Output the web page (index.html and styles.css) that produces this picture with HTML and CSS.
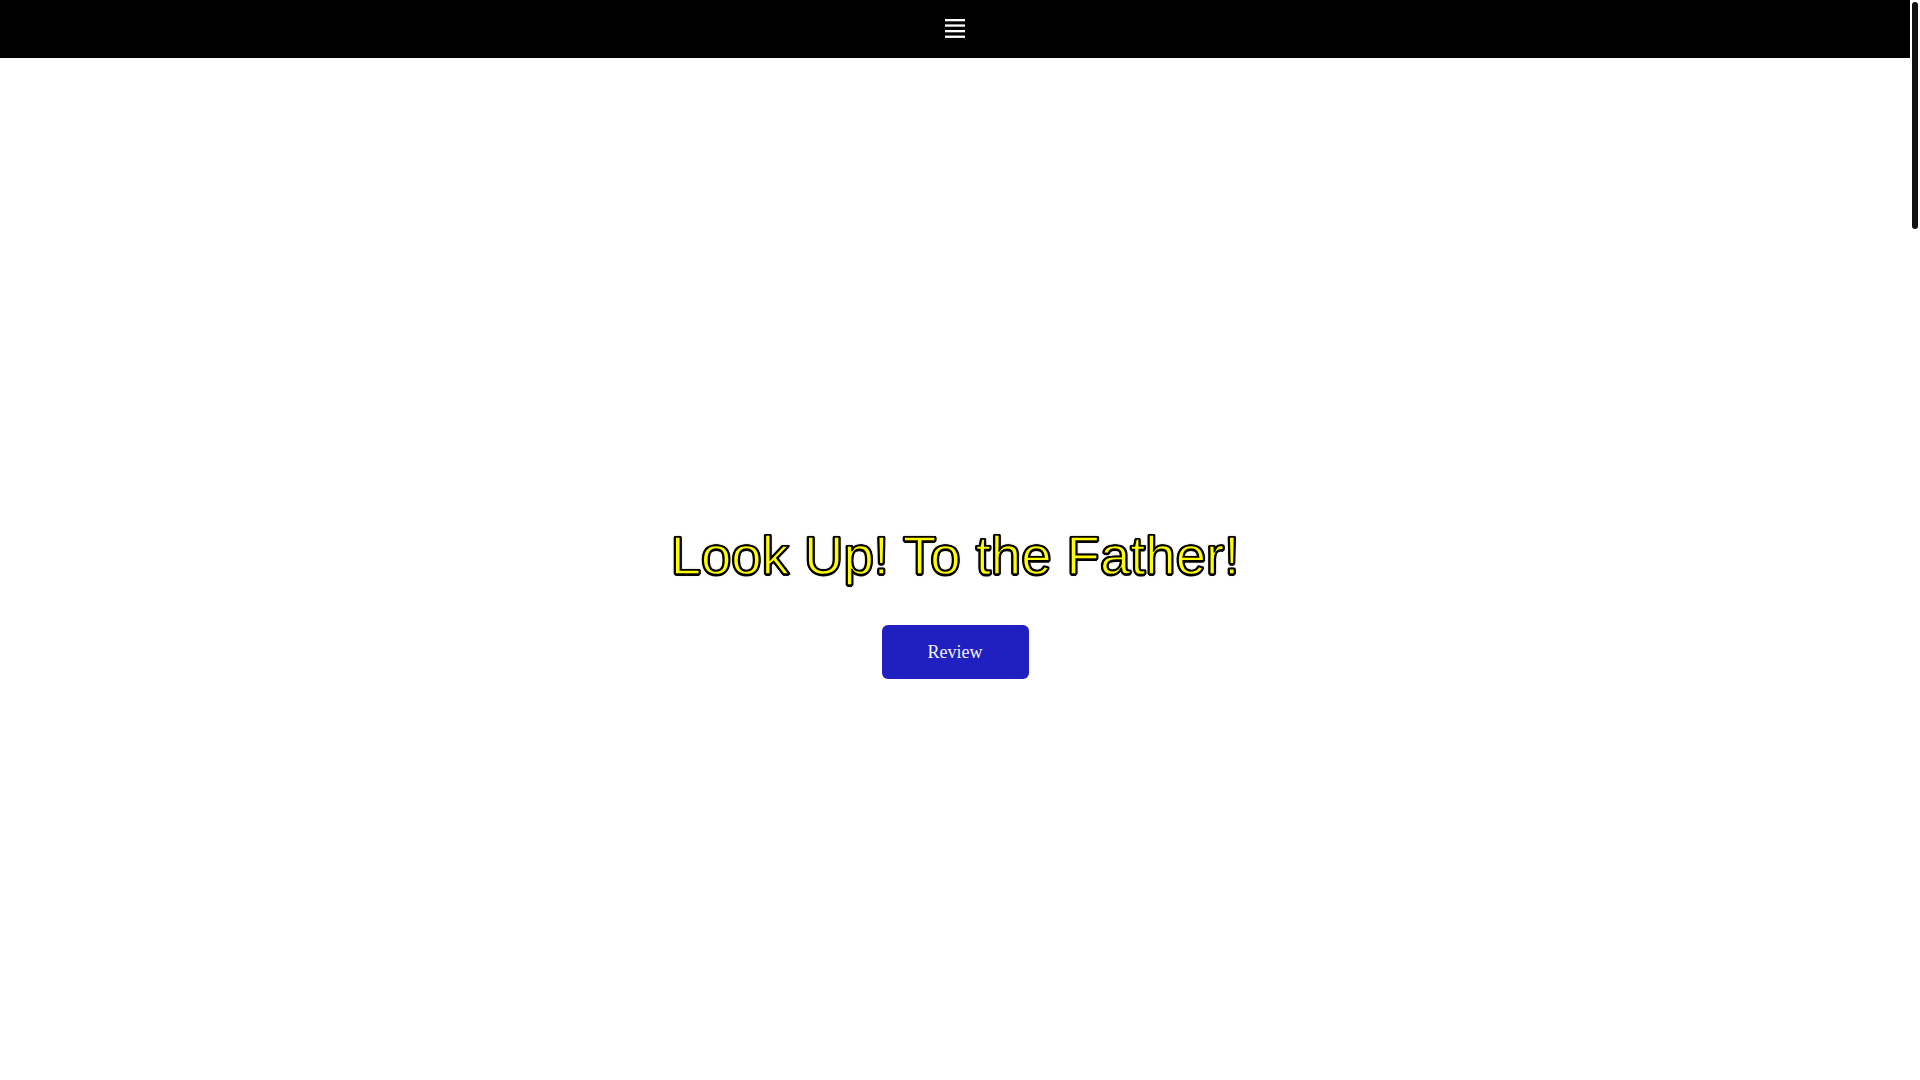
FILE: index.html
```html
<!DOCTYPE html>
<html lang="en">
<head>
<meta charset="utf-8">
<title>Look Up! To the Father!</title>
<link rel="stylesheet" href="styles.css">
</head>
<body>
<div class="page">
  <nav class="topbar">
    <button class="menu-toggle" aria-label="Menu">
      <svg class="menu-icon" width="20" height="20" viewBox="0 0 20 20" aria-hidden="true">
        <rect x="0" y="0" width="20" height="2.3" fill="#fff"/>
        <rect x="0" y="5.4" width="20" height="2.3" fill="#fff"/>
        <rect x="0" y="11" width="20" height="2.3" fill="#fff"/>
        <rect x="0" y="16.6" width="20" height="2.3" fill="#fff"/>
      </svg>
    </button>
  </nav>
  <main>
    <section class="hero">
      <h1 class="hero-title">Look Up! To the Father!</h1>
      <a class="review-btn" href="#review">Review</a>
    </section>
    <section class="more" id="review"></section>
  </main>
</div>
<div class="scroll-rail" aria-hidden="true">
  <div class="scroll-thumb"></div>
</div>
</body>
</html>
```
FILE: styles.css
```css
html, body {
  margin: 0;
  padding: 0;
  background: #fff;
}

body {
  font-family: "Liberation Serif", "Times New Roman", serif;
  display: grid;
  grid-template-columns: 1fr 10px;
  align-items: start;
}

.page {
  min-width: 0;
}

.scroll-rail {
  height: 100vh;
  background: #fff;
  padding: 2px;
  box-sizing: border-box;
}

.scroll-thumb {
  width: 6px;
  height: 227px;
  background: #111;
  border-radius: 3px;
}

.topbar {
  height: 58px;
  background: #000;
  display: flex;
  align-items: center;
  justify-content: center;
}

.menu-toggle {
  background: none;
  border: 0;
  padding: 0;
  margin: 0 0 1px 0;
  width: 20px;
  height: 20px;
  display: flex;
  cursor: pointer;
}

.menu-icon {
  display: block;
}

.hero {
  height: 100vh;
  display: flex;
  flex-direction: column;
  align-items: center;
  justify-content: center;
}

.hero-title {
  margin: 0 0 31px 0;
  font-family: "Liberation Sans", Arial, sans-serif;
  font-weight: normal;
  font-size: 54.5px;
  line-height: 77px;
  color: #ffff00;
  -webkit-text-stroke: 1.5px #000;
  text-shadow:
    -1px -1px 0 #000,
    1px -1px 0 #000,
    -1px 1px 0 #000,
    1px 1px 0 #000,
    0 -1.5px 0 #000,
    0 1.5px 0 #000,
    -1.5px 0 0 #000,
    1.5px 0 0 #000,
    0 0 3px rgba(0, 0, 0, 0.6);
}

.review-btn {
  display: flex;
  align-items: center;
  justify-content: center;
  width: 147px;
  height: 54px;
  border-radius: 6px;
  background: #2020c0;
  color: #f4f4ff;
  font-family: "Liberation Serif", "Times New Roman", serif;
  font-size: 18px;
  text-decoration: none;
}

.more {
  height: 3912px;
}
```
